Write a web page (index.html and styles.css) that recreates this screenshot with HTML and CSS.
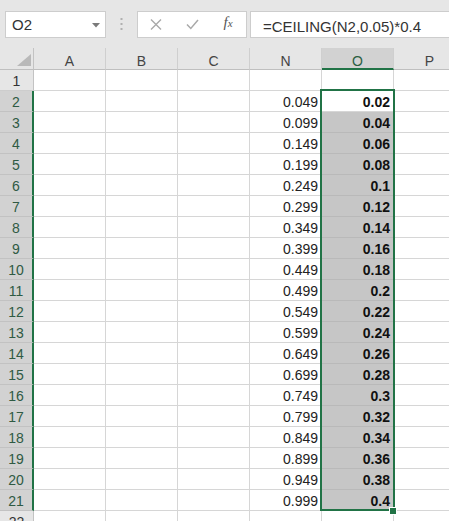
FILE: index.html
```html
<!DOCTYPE html>
<html>
<head>
<meta charset="utf-8">
<link rel="stylesheet" href="styles.css">
</head>
<body>
<div class="toolbar">
  <div class="namebox"><span>O2</span><svg class="caret" width="8" height="5" viewBox="0 0 8 5"><polygon points="0,0 8,0 4,4.5" fill="#7a7a7a"/></svg></div>
  <div class="sep"><svg width="3" height="13" viewBox="0 0 3 13"><rect x="0.5" y="0" width="2" height="2" fill="#b0b0b0"/><rect x="0.5" y="5" width="2" height="2" fill="#b0b0b0"/><rect x="0.5" y="10" width="2" height="2" fill="#b0b0b0"/></svg></div>
  <div class="fbtns">
    <div class="fbtn"><svg width="12" height="11" viewBox="0 0 12 11"><path d="M1 0.5 L11 10.5 M11 0.5 L1 10.5" stroke="#a9a9a9" stroke-width="1.4" fill="none"/></svg></div>
    <div class="fbtn"><svg width="13" height="11" viewBox="0 0 13 11"><path d="M1 5.5 L4.8 9.5 L12 1" stroke="#a9a9a9" stroke-width="1.5" fill="none"/></svg></div>
    <div class="fbtn fx"><span class="fxf">f</span><span class="fxx">x</span></div>
  </div>
  <div class="finput">=CEILING(N2,0.05)*0.4</div>
</div>
<div class="sheet">
  <div class="corner"><svg width="33" height="21" viewBox="0 0 33 21"><polygon points="31,6 31,18 17,18" fill="#b9b9b9"/></svg></div>
  <div class="ch">A</div><div class="ch">B</div><div class="ch">C</div><div class="ch">N</div><div class="ch sel">O</div><div class="ch">P</div>

  <div class="rh">1</div><div class="c"></div><div class="c"></div><div class="c"></div><div class="c"></div><div class="c"></div><div class="c"></div>
  <div class="rh sel">2</div><div class="c"></div><div class="c"></div><div class="c"></div><div class="c n">0.049</div><div class="c o">0.02</div><div class="c"></div>
  <div class="rh sel">3</div><div class="c"></div><div class="c"></div><div class="c"></div><div class="c n">0.099</div><div class="c o fill">0.04</div><div class="c"></div>
  <div class="rh sel">4</div><div class="c"></div><div class="c"></div><div class="c"></div><div class="c n">0.149</div><div class="c o fill">0.06</div><div class="c"></div>
  <div class="rh sel">5</div><div class="c"></div><div class="c"></div><div class="c"></div><div class="c n">0.199</div><div class="c o fill">0.08</div><div class="c"></div>
  <div class="rh sel">6</div><div class="c"></div><div class="c"></div><div class="c"></div><div class="c n">0.249</div><div class="c o fill">0.1</div><div class="c"></div>
  <div class="rh sel">7</div><div class="c"></div><div class="c"></div><div class="c"></div><div class="c n">0.299</div><div class="c o fill">0.12</div><div class="c"></div>
  <div class="rh sel">8</div><div class="c"></div><div class="c"></div><div class="c"></div><div class="c n">0.349</div><div class="c o fill">0.14</div><div class="c"></div>
  <div class="rh sel">9</div><div class="c"></div><div class="c"></div><div class="c"></div><div class="c n">0.399</div><div class="c o fill">0.16</div><div class="c"></div>
  <div class="rh sel">10</div><div class="c"></div><div class="c"></div><div class="c"></div><div class="c n">0.449</div><div class="c o fill">0.18</div><div class="c"></div>
  <div class="rh sel">11</div><div class="c"></div><div class="c"></div><div class="c"></div><div class="c n">0.499</div><div class="c o fill">0.2</div><div class="c"></div>
  <div class="rh sel">12</div><div class="c"></div><div class="c"></div><div class="c"></div><div class="c n">0.549</div><div class="c o fill">0.22</div><div class="c"></div>
  <div class="rh sel">13</div><div class="c"></div><div class="c"></div><div class="c"></div><div class="c n">0.599</div><div class="c o fill">0.24</div><div class="c"></div>
  <div class="rh sel">14</div><div class="c"></div><div class="c"></div><div class="c"></div><div class="c n">0.649</div><div class="c o fill">0.26</div><div class="c"></div>
  <div class="rh sel">15</div><div class="c"></div><div class="c"></div><div class="c"></div><div class="c n">0.699</div><div class="c o fill">0.28</div><div class="c"></div>
  <div class="rh sel">16</div><div class="c"></div><div class="c"></div><div class="c"></div><div class="c n">0.749</div><div class="c o fill">0.3</div><div class="c"></div>
  <div class="rh sel">17</div><div class="c"></div><div class="c"></div><div class="c"></div><div class="c n">0.799</div><div class="c o fill">0.32</div><div class="c"></div>
  <div class="rh sel">18</div><div class="c"></div><div class="c"></div><div class="c"></div><div class="c n">0.849</div><div class="c o fill">0.34</div><div class="c"></div>
  <div class="rh sel">19</div><div class="c"></div><div class="c"></div><div class="c"></div><div class="c n">0.899</div><div class="c o fill">0.36</div><div class="c"></div>
  <div class="rh sel">20</div><div class="c"></div><div class="c"></div><div class="c"></div><div class="c n">0.949</div><div class="c o fill">0.38</div><div class="c"></div>
  <div class="rh sel">21</div><div class="c"></div><div class="c"></div><div class="c"></div><div class="c n">0.999</div><div class="c o fill">0.4</div><div class="c"></div>
  <div class="rh">22</div><div class="c"></div><div class="c"></div><div class="c"></div><div class="c"></div><div class="c"></div><div class="c"></div>

  <div class="selbox"></div>
  <div class="handle"></div>
</div>
</body>
</html>
```
FILE: styles.css
```css
* { box-sizing: border-box; margin: 0; padding: 0; }
html, body { width: 449px; height: 521px; overflow: hidden; background: #fff; }
body { font-family: "Liberation Sans", Arial, sans-serif; }

.toolbar {
  height: 48px;
  background: #e6e6e6;
  display: flex;
  align-items: flex-start;
  padding: 11px 0 0 5px;
  width: 449px;
  overflow: hidden;
}
.namebox {
  width: 101px;
  height: 27px;
  flex: none;
  background: #fff;
  border: 1px solid #cdcdcd;
  display: flex;
  align-items: center;
  justify-content: space-between;
  padding: 0 5px 0 6px;
  font-size: 15px;
  line-height: 25px;
  color: #333;
}
.caret { margin-top: 1px; }
.sep {
  width: 31px;
  height: 27px;
  flex: none;
  display: flex;
  align-items: center;
  justify-content: center;
}
.fbtns {
  width: 110px;
  height: 27px;
  flex: none;
  background: #fff;
  border: 1px solid #cdcdcd;
  display: flex;
}
.fbtn {
  width: 36px;
  height: 25px;
  display: flex;
  align-items: center;
  justify-content: center;
}
.fx {
  font-family: "Liberation Serif", "DejaVu Serif", serif;
  font-style: italic;
  color: #555;
  align-items: baseline;
  padding-top: 2px;
}
.fxf { font-size: 15px; }
.fxx { font-size: 11px; }
.finput {
  flex: 1;
  margin-left: 3px;
  margin-right: -6px;
  height: 27px;
  background: #fff;
  border: 1px solid #cdcdcd;
  padding: 2px 0 0 12px;
  font-size: 15px;
  line-height: 25px;
  color: #333;
  white-space: nowrap;
}

.sheet {
  position: relative;
  display: grid;
  grid-template-columns: 34px repeat(6, 72px);
  grid-template-rows: 22px;
  grid-auto-rows: 21px;
  width: 466px;
}
.corner {
  background: #e6e6e6;
  border-right: 1px solid #c3c3c3;
  border-bottom: 1px solid #bfbfbf;
}
.corner svg { display: block; }
.ch {
  background: #e6e6e6;
  border-right: 1px solid #cfcfcf;
  border-bottom: 1px solid #bfbfbf;
  text-align: center;
  font-size: 14px;
  line-height: 26px;
  color: #444;
  overflow: hidden;
}
.ch.sel {
  background: #d2d2d2;
  border-bottom: 2px solid #217346;
  color: #2b5f42;
}
.rh {
  background: #e6e6e6;
  border-right: 1px solid #c3c3c3;
  border-bottom: 1px solid #cdcdcd;
  text-align: center;
  font-size: 14px;
  line-height: 22px;
  color: #333;
  overflow: hidden;
}
.rh.sel {
  background: #d2d2d2;
  border-right: 2px solid #217346;
  border-bottom-color: #c2c2c2;
  color: #2f5a43;
}
.c {
  border-right: 1px solid #d6d6d6;
  border-bottom: 1px solid #d6d6d6;
  font-size: 14px;
  line-height: 22px;
  padding-right: 3px;
  text-align: right;
  color: #222;
  overflow: hidden;
  white-space: nowrap;
}
.c.o {
  font-weight: bold;
  color: #111;
}
.c.fill {
  background: #c6c6c6;
  border-bottom-color: #b9b9b9;
}
.selbox {
  position: absolute;
  left: 320px;
  top: 41px;
  width: 75px;
  height: 422px;
  border: 2px solid #217346;
  pointer-events: none;
}
.handle {
  position: absolute;
  left: 390px;
  top: 460px;
  width: 6px;
  height: 6px;
  background: #217346;
  box-shadow: 0 0 0 1px #fff;
}
```
